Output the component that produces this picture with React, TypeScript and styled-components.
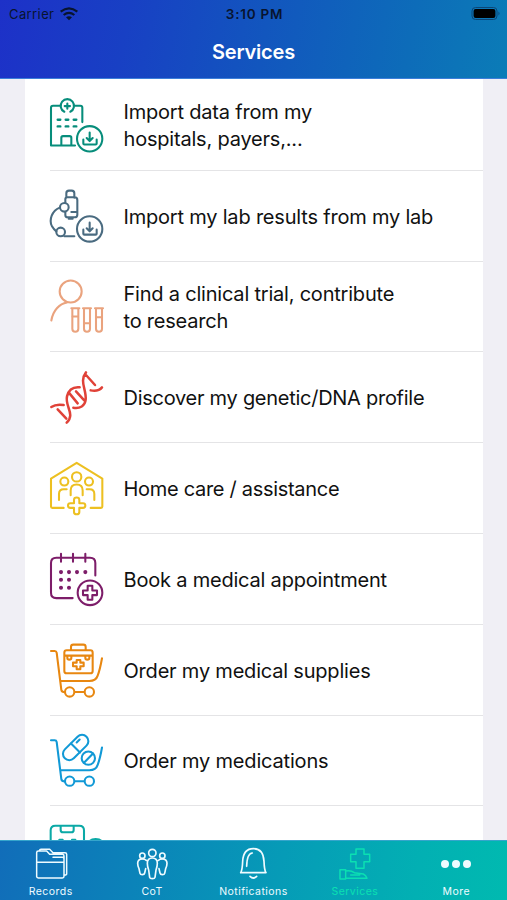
import React from 'react';
import styled, { createGlobalStyle } from 'styled-components';

const GlobalStyle = createGlobalStyle`
  * { box-sizing: border-box; }
  body { margin: 0; background: #f0eff5; font-family: Inter, "Liberation Sans", sans-serif; }
`;

const Screen = styled.div`
  width: 507px;
  height: 900px;
  display: flex;
  flex-direction: column;
  overflow: hidden;
`;

const Header = styled.header`
  flex: 0 0 79px;
  display: flex;
  flex-direction: column;
  background: linear-gradient(100deg, #1d31c8 0%, #1840c4 25%, #1256be 52%, #0d6cb9 80%, #0b7cb7 100%);
  border-bottom: 1px solid #3c7fda;
`;

const StatusBar = styled.div`
  height: 27px;
  display: grid;
  grid-template-columns: 1fr 1fr 1fr;
  align-items: center;
  padding: 0 6px 0 9px;
  color: #08142f;
  font-size: 13px;
`;

const Carrier = styled.div`
  display: flex;
  align-items: center;
  gap: 6px;
  letter-spacing: 0.4px;
`;

const Clock = styled.div`
  text-align: center;
  font-size: 13.5px;
  font-weight: 600;
  letter-spacing: 0.75px;
  text-indent: -1px;
`;

const Battery = styled.svg`
  width: 30px;
  height: 14px;
  margin-bottom: 2px;
  justify-self: end;
`;

const Title = styled.h1`
  margin: 0;
  height: 51px;
  line-height: 51px;
  text-align: center;
  color: #fff;
  font-size: 20px;
  font-weight: 600;
  letter-spacing: -0.2px;
`;

const List = styled.main`
  flex: 1;
  min-height: 0;
  overflow: hidden;
  margin: 0 24px 0 25px;
  padding-top: 1px;
  background: #fff;
`;

const Row = styled.div`
  height: 90.8px;
  margin-left: 25px;
  display: flex;
  align-items: center;
  border-bottom: 1px solid #e4e4e6;
`;

const IconSlot = styled.div`
  flex: none;
  display: flex;
  margin-left: -1px;
`;

const RowIcon = styled.svg<{ $color: string }>`
  width: 56px;
  height: 56px;
  fill: none;
  stroke: ${(p) => p.$color};
  stroke-width: 6.2;
  stroke-linecap: round;
  stroke-linejoin: round;
`;

const Label = styled.div<{ $spacing: number }>`
  margin-left: 18.5px;
  padding-top: 3px;
  color: #111;
  font-size: 20px;
  line-height: 27px;
  white-space: pre;
  letter-spacing: ${(p) => p.$spacing}px;
`;

const TabBar = styled.nav`
  flex: 0 0 60px;
  display: grid;
  grid-template-columns: repeat(5, 1fr);
  background: linear-gradient(100deg, #116db9 0%, #0b83b9 27%, #069bb7 55%, #02b0b3 82%, #00bab0 100%);
  border-top: 1px solid #35a5cc;
`;

const Tab = styled.div<{ $active?: boolean }>`
  display: flex;
  flex-direction: column;
  align-items: center;
  padding-top: 5px;
  color: ${(p) => (p.$active ? '#0be0b2' : '#effbff')};
  font-size: 10.5px;
  line-height: 14px;
  letter-spacing: 0.45px;
`;

const TabIcon = styled.svg`
  width: 36px;
  height: 36px;
  margin-bottom: 3px;
  fill: none;
  stroke: currentColor;
  stroke-width: 5;
  stroke-linecap: round;
  stroke-linejoin: round;
`;

const Download = () => (
  <g>
    <circle cx="149" cy="146" r="38" />
    <path d="M149 127v25M140 144l9 9 9-9M130 148v12q0 3 3 3h34q3 0 3-3v-12" />
  </g>
);

const Hospital = () => (
  <g>
    <path d="M60 47H39q-6 0-6 6v113h72M103 47h18q6 0 6 6v43M64 166v-23q0-5 5-5h20q5 0 5 5v23" />
    <path d="M73 65a20 20 0 1 1 18 0M82 40v16M74 48h16" />
    <path d="M53 89h8M77 89h8M101 89h8M53 109h8M77 109h8M101 109h8" strokeWidth="7" />
    <Download />
  </g>
);

const Microscope = () => (
  <g>
    <path d="M79 52V39q0-8 8-8h8q8 0 8 8v13M76 68V57q0-6 6-6h22q8 0 8 8v44q0 8-8 8H83q-7 0-7-7V95M94 95h17M86 115h12" />
    <circle cx="73" cy="81" r="13" />
    <path d="M59 82C36 91 26 119 36 138q5 9 13 15M73 168h30" />
    <circle cx="62" cy="155" r="13" />
    <Download />
  </g>
);

const Tubes = () => (
  <g>
    <circle cx="92" cy="66" r="33" />
    <path d="M81 99C58 103 39 123 34 153" />
    {[106, 141, 177].map((x) => (
      <path key={x} d={`M${x - 12} 116h24M${x - 9} 116v62q0 9 9 9t9-9v-62`} />
    ))}
    <path d="M98 141h16M133 161h16M169 143h16" />
  </g>
);

const Dna = () => (
  <g strokeWidth="7.5">
    <path d="M80 183C107 157 74 134 81 104c5-20 18-29 38-27M34 136q14-10 37-6M53 143l26 28M86 92l27 33M108 89l24 26M100 138c20 3 35-5 37-24 3-30-20-55 1-82M152 86c17 3 27 0 34-9M138 40l27 30" />
  </g>
);

const Home = () => (
  <g>
    <path d="M71 168H37q-4 0-4-4V80l77-47 77 47v84q0 4-4 4h-31" />
    <circle cx="110" cy="75" r="14" />
    <circle cx="73" cy="89" r="12" />
    <circle cx="147" cy="89" r="12" />
    <path d="M57 144v-18q0-14 14-14h9M163 144v-18q0-14-14-14h-9M92 130v-14q0-18 18-18t18 18v14" />
    <path d="M102 154v-10q0-7 8-7t8 7v10h11q7 0 7 7t-7 7h-11v12q0 7-8 7t-8-7v-12H91q-7 0-7-7t7-7z" />
  </g>
);

const Calendar = () => (
  <g>
    <path d="M98 165H49q-16 0-16-16V60q0-16 16-16h101q16 0 16 16v37M63 32v24M99 32v24M136 32v24" />
    {[[63, 87], [87, 87], [111, 87], [136, 87], [63, 110], [87, 110], [63, 134], [87, 134]].map(([x, y]) => (
      <circle key={`${x}-${y}`} cx={x} cy={y} r="3" />
    ))}
    <circle cx="150" cy="149" r="37" />
    <path d="M143 142v-14h14v14h14v14h-14v14h-14v-14h-14v-14z" />
  </g>
);

const Cart = () => (
  <g>
    <path d="M33 50h11q5 0 6 5l14 112q1 7 11 7M62 140h86q20 0 25-16 7-18 13-52M105 173h27" />
    <circle cx="89" cy="173" r="14" />
    <circle cx="148" cy="173" r="14" />
  </g>
);

const Supplies = () => (
  <g>
    <Cart />
    <path d="M93 47v-9q0-7 7-7h30q7 0 7 7v9M80 48h71q7 0 7 7v55q0 7-7 7H80q-7 0-7-7V55q0-7 7-7zM74 64h84M82 66v5q0 5 6 5t6-5v-5M136 66v5q0 5 6 5t6-5v-5" />
    <path d="M110 85v-8h11v8h10v11h-10v9h-11v-9h-11V85z" />
  </g>
);

const Medication = () => (
  <g>
    <Cart />
    <rect x="61" y="53" width="92" height="38" rx="19" transform="rotate(-45 107 72)" />
    <path d="M93 60l27 27M110 57l9-9" />
    <circle cx="145" cy="104" r="20" />
    <path d="M132 118l27-28" />
  </g>
);

const Device = () => (
  <g>
    <path d="M152 140V47q0-14 14-14h72q14 0 14 14v93M182 34v12q0 7 7 7h25q7 0 7-7V34M178 75h10M216 75h10M266 140v-49q0-18 21-18t21 18" />
  </g>
);

const services = [
  { label: 'Import data from my\nhospitals, payers,...', color: '#078d7b', box: '27 20.7 168 168', Icon: Hospital, spacing: -0.2 },
  { label: 'Import my lab results from my lab', color: '#4a6b80', box: '27 23.1 168 168', Icon: Microscope, spacing: -0.2 },
  { label: 'Find a clinical trial, contribute\nto research', color: '#eaa37e', box: '27 25.5 168 168', Icon: Tubes, spacing: -0.21 },
  { label: 'Discover my genetic/DNA profile', color: '#e04238', box: '27 21.9 168 168', Icon: Dna, spacing: -0.27 },
  { label: 'Home care / assistance', color: '#edc021', box: '27 24.3 168 168', Icon: Home, spacing: -0.3 },
  { label: 'Book a medical appointment', color: '#7d1d69', box: '27 23.7 168 168', Icon: Calendar, spacing: -0.2 },
  { label: 'Order my medical supplies', color: '#e88710', box: '27 23.1 168 168', Icon: Supplies, spacing: -0.2 },
  { label: 'Order my medications', color: '#1199d6', box: '27 25.5 168 168', Icon: Medication, spacing: -0.18 },
  { label: '', color: '#0ba9a6', box: '147 25 168 168', Icon: Device, spacing: 0 },
];

const Folder = () => (
  <g strokeWidth="4.5">
    <path d="M109 185V113q0-5 5-5h25l9 10h38q5 0 5 5v61q0 5-5 5h-72q-5 0-5-5M109 142h82M118 106q0-3 4-3h26l10 10h36q5 0 5 5v58q0 4-6 4M158 127h28q5 0 5 5" />
  </g>
);

const People = () => (
  <g strokeWidth="5">
    <circle cx="457" cy="114" r="11" />
    <circle cx="427" cy="122" r="8" />
    <circle cx="487" cy="122" r="8" />
    <path d="M442 145q0-16 15-16t15 16q0 10-4 20l-3 22q-1 4-8 4t-8-4l-3-22q-4-10-4-20zM439 136q-4-4-12-4-14 0-14 13 0 9 4 16l3 14q1 4 7 4t7-5l3-13M475 136q4-4 12-4 14 0 14 13 0 9-4 16l-3 14q-1 4-7 4t-7-5l-3-13" />
  </g>
);

const Bell = () => (
  <g strokeWidth="5">
    <path d="M723 173q5-7 6-34 2-38 32-38t32 38q1 27 6 34zM741 154q1-39 17-40M751 184q10 10 20 0" />
  </g>
);

const Care = () => (
  <g strokeWidth="4.5">
    <path d="M305 118v-16h24v16h17v22h-17v20h-24v-20h-16v-22zM257 164h17v28h-17zM274 168q16-3 26 5l27 4q8 4 11 13h-64M289 180h27" />
  </g>
);

const Dots = () => (
  <g fill="currentColor" stroke="none">
    <circle cx="574" cy="147" r="12" />
    <circle cx="607" cy="147" r="12" />
    <circle cx="640" cy="147" r="12" />
  </g>
);

const tabs = [
  { label: 'Records', box: '98 93 108 108', Icon: Folder },
  { label: 'CoT', box: '402 93 108 108', Icon: People },
  { label: 'Notifications', box: '706 93 108 108', Icon: Bell },
  { label: 'Services', box: '248 93 108 108', Icon: Care, active: true },
  { label: 'More', box: '553 93 108 108', Icon: Dots },
];

export default function App() {
  return (
    <Screen>
      <GlobalStyle />
      <Header>
        <StatusBar>
          <Carrier>
            Carrier
            <svg width="18" height="14" viewBox="0 0 54 42" fill="none" stroke="#08142f" strokeWidth="6.5">
              <path d="M2 14Q27-6 52 14M11 24Q27 11 43 24" />
              <path d="M18 31q9-7 18 0l-9 9z" fill="#08142f" stroke="none" />
            </svg>
          </Carrier>
          <Clock>3:10 PM</Clock>
          <Battery viewBox="0 0 30 14">
            <rect x="1" y="1.5" width="25" height="12" rx="3.5" fill="none" stroke="#0b4677" />
            <rect x="2.6" y="3" width="21.8" height="9" rx="2" fill="#000" />
            <path d="M27.5 5.5q2 2 0 4z" fill="#0b4677" />
          </Battery>
        </StatusBar>
        <Title>Services</Title>
      </Header>
      <List>
        {services.map(({ label, color, box, Icon, spacing }) => (
          <Row key={color}>
            <IconSlot>
              <RowIcon $color={color} viewBox={box}>
                <Icon />
              </RowIcon>
            </IconSlot>
            <Label $spacing={spacing}>{label}</Label>
          </Row>
        ))}
      </List>
      <TabBar>
        {tabs.map(({ label, box, Icon, active }) => (
          <Tab key={label} $active={active}>
            <TabIcon viewBox={box}>
              <Icon />
            </TabIcon>
            {label}
          </Tab>
        ))}
      </TabBar>
    </Screen>
  );
}
